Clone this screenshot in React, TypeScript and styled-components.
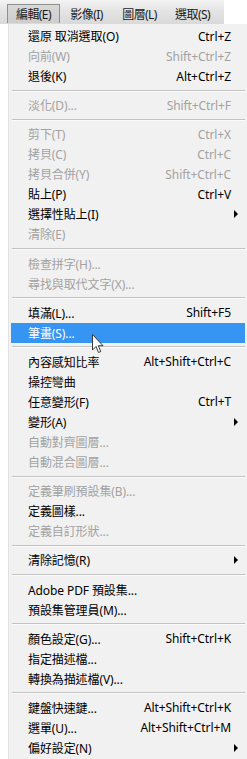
import React from "react";
import styled, { createGlobalStyle } from "styled-components";

const GlobalStyle = createGlobalStyle`
  html, body { margin: 0; padding: 0; background: #ffffff; }
  body {
    font-family: "Noto Sans", "Noto Sans CJK TC", sans-serif;
    font-size: 12px;
    color: #000;
  }
`;

const Page = styled.div`
  width: 247px;
  height: 759px;
  position: relative;
  overflow: hidden;
  background: #fff;
`;

const MenuBar = styled.div`
  display: flex;
  align-items: stretch;
  width: 224px;
  height: 24px;
  box-sizing: border-box;
  padding: 4px 0 0 7px;
  background: linear-gradient(to bottom, #f3f3f3 0%, #e4e4e4 45%, #d9d9d9 100%);
`;

const BarItem = styled.div<{ $active?: boolean }>`
  display: flex;
  align-items: center;
  justify-content: center;
  width: 53px;
  height: 19px;
  box-sizing: border-box;
  padding-bottom: 1px;
  border: 1px solid ${(p) => (p.$active ? "#8e8f8f" : "transparent")};
  border-bottom: none;
  background: ${(p) =>
    p.$active ? "linear-gradient(to bottom, #d8d8d8, #cdcdcd)" : "transparent"};
  color: #1a1a1a;
  white-space: nowrap;
  letter-spacing: -0.6px;
`;

const Dropdown = styled.div`
  margin-left: 8px;
  padding: 2px 2px 0 2px;
  background: #f1f1f1;
  border-left: 1px solid #e2e2e2;
  height: 735px;
  box-sizing: border-box;
`;

const Item = styled.div<{ $disabled?: boolean; $hover?: boolean }>`
  display: flex;
  align-items: center;
  height: 20px;
  box-sizing: border-box;
  padding: 0 14px 0 17px;
  position: relative;
  white-space: nowrap;
  color: ${(p) => (p.$hover ? "#ffffff" : p.$disabled ? "#a2a2a2" : "#000")};
  background: ${(p) => (p.$hover ? "#3694f2" : "transparent")};
`;

const Label = styled.span`
  flex: 1;
  letter-spacing: -0.1px;
`;

const Shortcut = styled.span`
  text-align: right;
  letter-spacing: -0.1px;
`;

const SubArrow = styled.span`
  position: absolute;
  right: 7px;
  top: 6px;
  width: 0;
  height: 0;
  border-top: 4px solid transparent;
  border-bottom: 4px solid transparent;
  border-left: 4px solid #000;
`;

const Separator = styled.div`
  height: 9.2px;
  display: flex;
  align-items: center;
  &::before {
    content: "";
    display: block;
    width: 100%;
    margin-left: 1px;
    border-top: 1px solid #c3c3c3;
    border-bottom: 1px solid #fbfbfb;
  }
`;

const Cursor = styled.svg`
  position: absolute;
  left: 92px;
  top: 334px;
  width: 13px;
  height: 20px;
  pointer-events: none;
`;

type Entry =
  | { sep: true }
  | { label: string; sc?: string; dis?: boolean; sub?: boolean; hover?: boolean };

const entries: Entry[] = [
  { label: "還原 取消選取(O)", sc: "Ctrl+Z" },
  { label: "向前(W)", sc: "Shift+Ctrl+Z", dis: true },
  { label: "退後(K)", sc: "Alt+Ctrl+Z" },
  { sep: true },
  { label: "淡化(D)...", sc: "Shift+Ctrl+F", dis: true },
  { sep: true },
  { label: "剪下(T)", sc: "Ctrl+X", dis: true },
  { label: "拷貝(C)", sc: "Ctrl+C", dis: true },
  { label: "拷貝合併(Y)", sc: "Shift+Ctrl+C", dis: true },
  { label: "貼上(P)", sc: "Ctrl+V" },
  { label: "選擇性貼上(I)", sub: true },
  { label: "清除(E)", dis: true },
  { sep: true },
  { label: "檢查拼字(H)...", dis: true },
  { label: "尋找與取代文字(X)...", dis: true },
  { sep: true },
  { label: "填滿(L)...", sc: "Shift+F5" },
  { label: "筆畫(S)...", hover: true },
  { sep: true },
  { label: "內容感知比率", sc: "Alt+Shift+Ctrl+C" },
  { label: "操控彎曲" },
  { label: "任意變形(F)", sc: "Ctrl+T" },
  { label: "變形(A)", sub: true },
  { label: "自動對齊圖層...", dis: true },
  { label: "自動混合圖層...", dis: true },
  { sep: true },
  { label: "定義筆刷預設集(B)...", dis: true },
  { label: "定義圖樣..." },
  { label: "定義自訂形狀...", dis: true },
  { sep: true },
  { label: "清除記憶(R)", sub: true },
  { sep: true },
  { label: "Adobe PDF 預設集..." },
  { label: "預設集管理員(M)..." },
  { sep: true },
  { label: "顏色設定(G)...", sc: "Shift+Ctrl+K" },
  { label: "指定描述檔..." },
  { label: "轉換為描述檔(V)..." },
  { sep: true },
  { label: "鍵盤快速鍵...", sc: "Alt+Shift+Ctrl+K" },
  { label: "選單(U)...", sc: "Alt+Shift+Ctrl+M" },
  { label: "偏好設定(N)", sub: true },
];

export default function App() {
  return (
    <Page>
      <GlobalStyle />
      <MenuBar>
        <BarItem $active>編輯(E)</BarItem>
        <BarItem>影像(I)</BarItem>
        <BarItem>圖層(L)</BarItem>
        <BarItem>選取(S)</BarItem>
      </MenuBar>
      <Dropdown>
        {entries.map((e, i) =>
          "sep" in e ? (
            <Separator key={i} />
          ) : (
            <Item key={i} $disabled={e.dis} $hover={e.hover}>
              <Label>{e.label}</Label>
              {e.sc && <Shortcut>{e.sc}</Shortcut>}
              {e.sub && <SubArrow />}
            </Item>
          )
        )}
      </Dropdown>
      <Cursor viewBox="0 0 13 20">
        <path
          d="M0.5 0.5 L0.5 16 L4 12.5 L6.5 18.5 L8.8 17.5 L6.3 11.7 L11 11.7 Z"
          fill="#ffffff"
          stroke="#3a3a3a"
          strokeWidth="1"
          strokeLinejoin="round"
        />
      </Cursor>
    </Page>
  );
}
